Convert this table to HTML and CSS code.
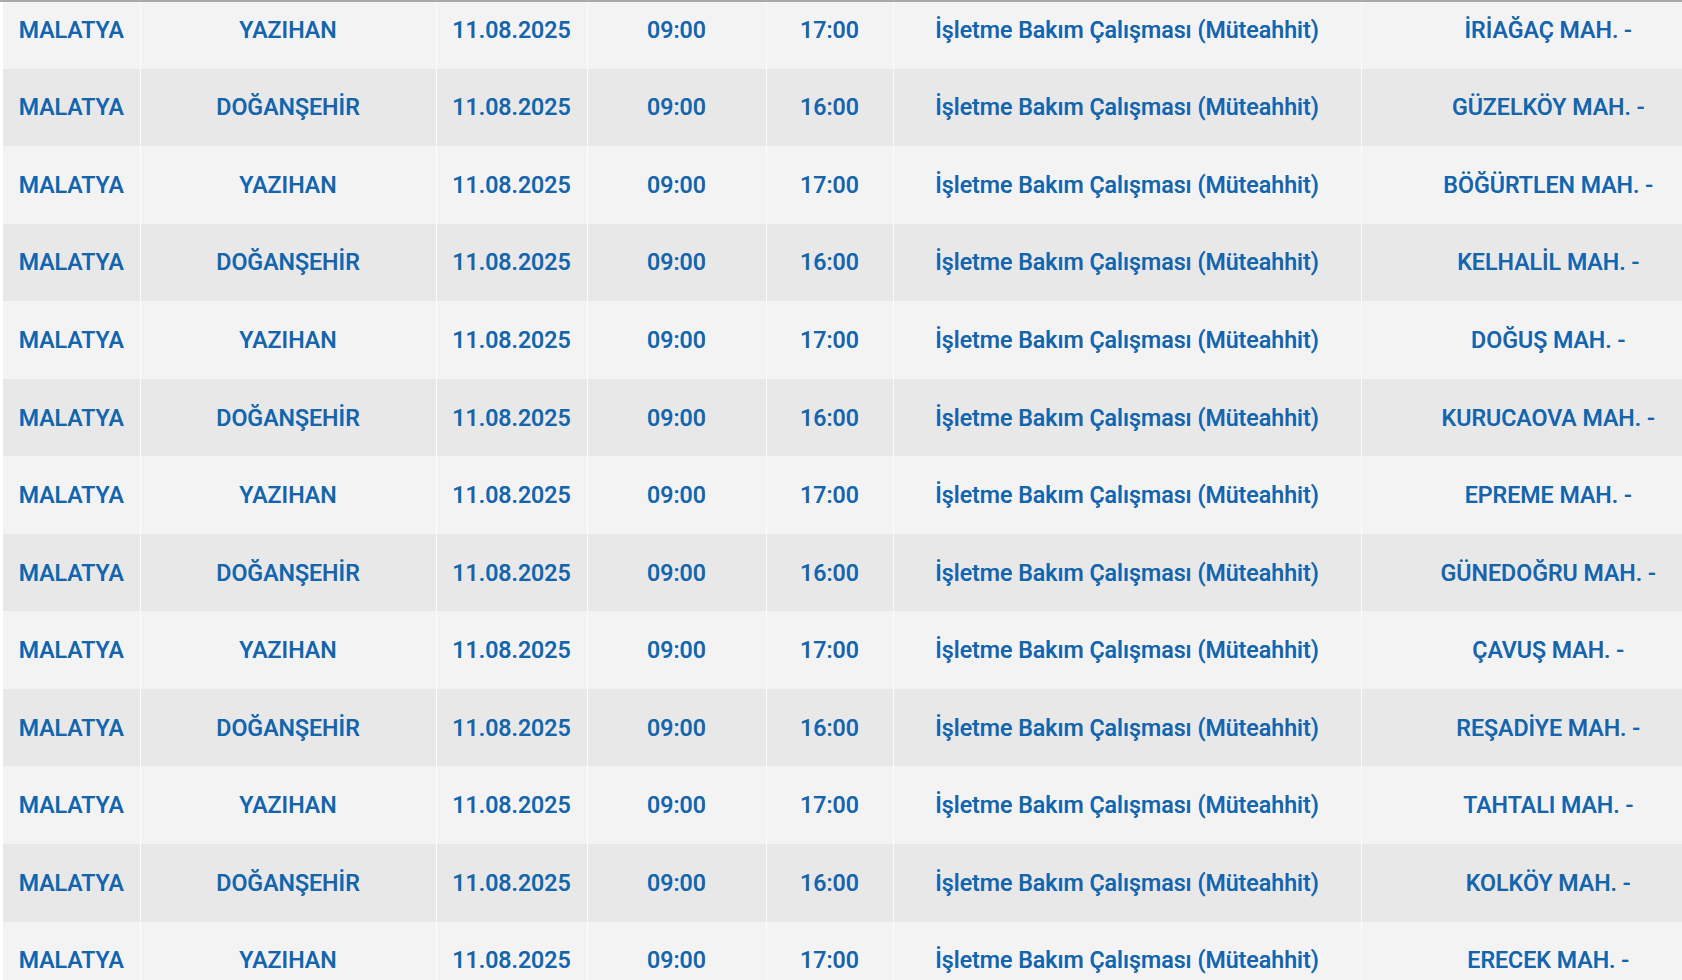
FILE: index.html
```html
<!DOCTYPE html>
<html lang="tr">
<head>
<meta charset="utf-8">
<title>Planlı Kesintiler</title>
<link rel="stylesheet" href="styles.css">
</head>
<body>
<div class="viewport">
  <table class="outages">
    <colgroup>
      <col class="c-il"><col class="c-ilce"><col class="c-tarih"><col class="c-bas"><col class="c-bit"><col class="c-neden"><col class="c-yer">
    </colgroup>
    <tbody>
      <tr><td>MALATYA</td><td>YAZIHAN</td><td>11.08.2025</td><td>09:00</td><td>17:00</td><td>İşletme Bakım Çalışması (Müteahhit)</td><td>İRİAĞAÇ MAH. -</td></tr>
      <tr><td>MALATYA</td><td>DOĞANŞEHİR</td><td>11.08.2025</td><td>09:00</td><td>16:00</td><td>İşletme Bakım Çalışması (Müteahhit)</td><td>GÜZELKÖY MAH. -</td></tr>
      <tr><td>MALATYA</td><td>YAZIHAN</td><td>11.08.2025</td><td>09:00</td><td>17:00</td><td>İşletme Bakım Çalışması (Müteahhit)</td><td>BÖĞÜRTLEN MAH. -</td></tr>
      <tr><td>MALATYA</td><td>DOĞANŞEHİR</td><td>11.08.2025</td><td>09:00</td><td>16:00</td><td>İşletme Bakım Çalışması (Müteahhit)</td><td>KELHALİL MAH. -</td></tr>
      <tr><td>MALATYA</td><td>YAZIHAN</td><td>11.08.2025</td><td>09:00</td><td>17:00</td><td>İşletme Bakım Çalışması (Müteahhit)</td><td>DOĞUŞ MAH. -</td></tr>
      <tr><td>MALATYA</td><td>DOĞANŞEHİR</td><td>11.08.2025</td><td>09:00</td><td>16:00</td><td>İşletme Bakım Çalışması (Müteahhit)</td><td>KURUCAOVA MAH. -</td></tr>
      <tr><td>MALATYA</td><td>YAZIHAN</td><td>11.08.2025</td><td>09:00</td><td>17:00</td><td>İşletme Bakım Çalışması (Müteahhit)</td><td>EPREME MAH. -</td></tr>
      <tr><td>MALATYA</td><td>DOĞANŞEHİR</td><td>11.08.2025</td><td>09:00</td><td>16:00</td><td>İşletme Bakım Çalışması (Müteahhit)</td><td>GÜNEDOĞRU MAH. -</td></tr>
      <tr><td>MALATYA</td><td>YAZIHAN</td><td>11.08.2025</td><td>09:00</td><td>17:00</td><td>İşletme Bakım Çalışması (Müteahhit)</td><td>ÇAVUŞ MAH. -</td></tr>
      <tr><td>MALATYA</td><td>DOĞANŞEHİR</td><td>11.08.2025</td><td>09:00</td><td>16:00</td><td>İşletme Bakım Çalışması (Müteahhit)</td><td>REŞADİYE MAH. -</td></tr>
      <tr><td>MALATYA</td><td>YAZIHAN</td><td>11.08.2025</td><td>09:00</td><td>17:00</td><td>İşletme Bakım Çalışması (Müteahhit)</td><td>TAHTALI MAH. -</td></tr>
      <tr><td>MALATYA</td><td>DOĞANŞEHİR</td><td>11.08.2025</td><td>09:00</td><td>16:00</td><td>İşletme Bakım Çalışması (Müteahhit)</td><td>KOLKÖY MAH. -</td></tr>
      <tr><td>MALATYA</td><td>YAZIHAN</td><td>11.08.2025</td><td>09:00</td><td>17:00</td><td>İşletme Bakım Çalışması (Müteahhit)</td><td>ERECEK MAH. -</td></tr>
    </tbody>
  </table>
</div>
</body>
</html>
```

FILE: styles.css
```css
html, body {
  margin: 0;
  padding: 0;
  background: #ffffff;
}

body {
  font-family: Roboto, "Noto Sans", "Liberation Sans", sans-serif;
  overflow: hidden;
}

.viewport {
  height: 980px;
  overflow: hidden;
  border-top: 2px solid #a9a9a9;
  box-sizing: border-box;
  padding-left: 3px;
}

.outages {
  width: 1732px;
  margin-top: -11px;
  border-collapse: collapse;
  table-layout: fixed;
}

.c-il { width: 137px; }
.c-ilce { width: 296px; }
.c-tarih { width: 151px; }
.c-bas { width: 179px; }
.c-bit { width: 127px; }
.c-neden { width: 468px; }
.c-yer { width: 374px; }

.outages td {
  height: 77.55px;
  padding: 0 6px;
  text-align: center;
  vertical-align: middle;
  font-size: 23.2px;
  font-weight: 500;
  color: #1565ad;
  text-shadow: 0 0 0.6px rgba(21, 101, 173, 0.6);
  border-left: 1px solid #fbfbfb;
  white-space: nowrap;
  box-sizing: border-box;
}

.outages td:first-child {
  border-left: none;
}

.outages tr:nth-child(odd) td {
  background: #f3f3f3;
}

.outages tr:nth-child(even) td {
  background: #e8e8e8;
}
```
